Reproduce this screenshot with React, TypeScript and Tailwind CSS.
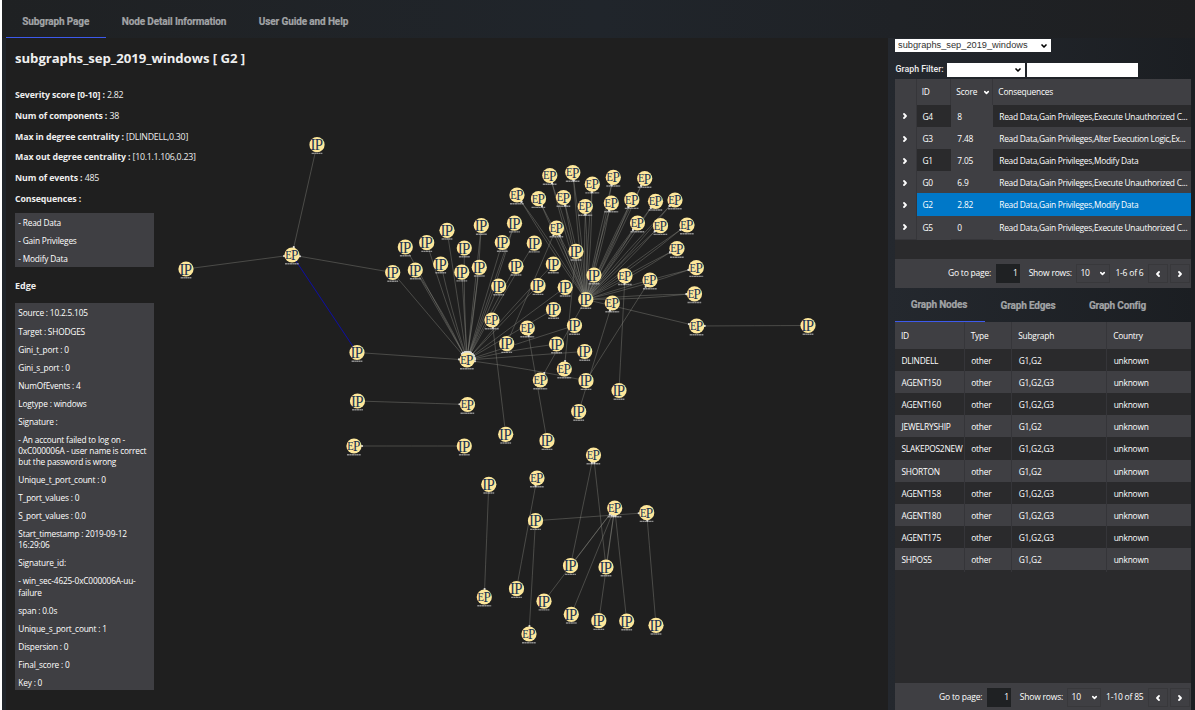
import type { ReactNode } from "react";
import { ChevronDown, ChevronLeft, ChevronRight } from "lucide-react";

type Kind = "IP" | "EP";
type Point = [number, number];

const HUB_A: Point = [467, 360];
const HUB_B: Point = [585.8, 299.5];

// IP nodes that only report to the left hub
const SPOKES_A: Point[] = [
  [405.3, 247], [426.7, 242.7], [447, 230.3], [481.3, 225.5], [464.3, 248], [502.3, 242.5],
  [514.5, 223.2], [534.3, 243.2], [392.7, 272.5], [415.3, 270], [440.7, 264], [461.8, 272.2],
  [479.3, 267.3], [516, 266.3], [498.7, 286], [538, 285.7], [553.3, 264], [565.2, 287.3],
  [553.5, 309.5], [556.5, 344], [584.7, 351.5], [574.5, 325.5], [586, 380.7],
];

// Endpoints that are reached from the right hub
const SPOKES_B: Point[] = [
  [549.8, 175.5], [572.8, 172.5], [592.3, 184.2], [613.3, 177.3], [644.7, 178.5], [517, 195],
  [538.5, 198.7], [563.5, 197.5], [585.3, 206.5], [611.3, 203], [631.8, 199.7], [655.5, 201.3],
  [675, 200], [556.5, 228], [637.5, 223], [660.5, 225.7], [687, 225], [677, 248.5],
  [696.3, 267.7], [694.5, 293.8],
];

const OTHER_EP: Point[] = [
  [625, 275.8], [650, 280], [612.3, 303], [696.7, 326], [492, 320], [527.3, 328], [540.3, 380],
  [564.3, 369], HUB_A, [593.5, 455], [537, 478], [614.7, 508], [646.7, 512.7], [484.3, 597],
  [529, 634], [292, 255], [467.5, 404.5], [354, 446],
];

const OTHER_IP: Point[] = [
  [506.7, 343.7], [576, 251.3], [594, 275], HUB_B, [619, 390.5], [578.7, 411.5], [505.7, 434.3],
  [547, 440.7], [488.8, 484.3], [535.5, 520.7], [570.5, 565.7], [606, 567], [516.5, 588.7],
  [544, 601.2], [571.3, 614.3], [598.8, 620.7], [626.7, 621], [656, 625.3], [317, 144.7],
  [186, 269], [357, 352.5], [357.5, 401], [464.3, 446], [808, 325.5],
];

const LINKS: [Point, Point][] = [
  [[317, 144.7], [292, 255]],
  [[186, 269], [292, 255]],
  [[392.7, 272.5], [292, 255]],
  [[357, 352.5], HUB_A],
  [[357.5, 401], [467.5, 404.5]],
  [[464.3, 446], [354, 446]],
  [[808, 325.5], [696.7, 326]],
  [HUB_B, [696.7, 326]],
  [HUB_B, [540.3, 380]],
  [[576, 251.3], [564.3, 369]],
  [[505.7, 434.3], [492, 320]],
  [[547, 440.7], [527.3, 328]],
  [[506.7, 343.7], [556.5, 228]],
  [[578.7, 411.5], [612.3, 303]],
  [[586, 380.7], [650, 280]],
  [[619, 390.5], [625, 275.8]],
  [[488.8, 484.3], [484.3, 597]],
  [[516.5, 588.7], [537, 478]],
  [[535.5, 520.7], [529, 634]],
  [[535.5, 520.7], [646.7, 512.7]],
  [[570.5, 565.7], [593.5, 455]],
  [[606, 567], [593.5, 455]],
  [[606, 567], [614.7, 508]],
  [[570.5, 565.7], [614.7, 508]],
  [[544, 601.2], [614.7, 508]],
  [[571.3, 614.3], [614.7, 508]],
  [[598.8, 620.7], [614.7, 508]],
  [[626.7, 621], [614.7, 508]],
  [[656, 625.3], [646.7, 512.7]],
];

function Link({ from, to, bend = 0 }: { from: Point; to: Point; bend?: number }) {
  const dx = to[0] - from[0];
  const dy = to[1] - from[1];
  const len = Math.hypot(dx, dy);
  const end: Point = [to[0] - (dx / len) * 8, to[1] - (dy / len) * 8];
  const mid: Point = [(from[0] + to[0]) / 2 - (dy / len) * bend, (from[1] + to[1]) / 2 + (dx / len) * bend];
  return (
    <g>
      <path d={`M${from[0]} ${from[1]}Q${mid[0]} ${mid[1]} ${end[0]} ${end[1]}`} fill="none" stroke="#8d8b84" strokeOpacity={0.62} strokeWidth={0.65} />
      <circle cx={end[0]} cy={end[1]} r={1.1} fill="#dedede" />
    </g>
  );
}

function Node({ at, kind }: { at: Point; kind: Kind }) {
  const half = kind === "IP" ? 5.4 : 7;
  return (
    <g transform={`translate(${at[0]} ${at[1]})`}>
      <circle r={7.6} fill="#fde79b" />
      <g className="font-['Liberation_Serif',serif]" fill="#1b3350">
        {kind === "IP" ? (
          <>
            <text transform="translate(-6.6 5.5) scale(.9 1)" fontSize={16.5}>I</text>
            <text transform="translate(-2.2 5.5) scale(.9 1)" fontSize={16.5}>P</text>
          </>
        ) : (
          <>
            <text transform="translate(-6.8 3.8) scale(.82 1)" fontSize={13}>E</text>
            <text transform="translate(-.9 5) scale(.95 1)" fontSize={14}>P</text>
          </>
        )}
      </g>
      <path d={`M${-half} 8.7H${half}`} stroke="#d5d5d5" strokeWidth={1.4} strokeDasharray="2.4 .3 1.6 .3" opacity={0.6} />
    </g>
  );
}

function Graph() {
  return (
    <svg className="h-full w-full" viewBox="160 38 728 672">
      {SPOKES_A.map((p, i) => <Link key={i} from={p} to={HUB_A} bend={i % 3 === 1 ? 2 : 0} />)}
      {[3, 6, 9].map((i) => <Link key={i} from={SPOKES_A[i]} to={HUB_A} bend={-4} />)}
      {SPOKES_B.map((p, i) => <Link key={i} from={HUB_B} to={p} bend={3} />)}
      {SPOKES_B.map((p, i) => <Link key={i} from={HUB_B} to={p} bend={-2} />)}
      {LINKS.map(([a, b], i) => <Link key={i} from={a} to={b} />)}
      <path d="M292 255L357 352.5" stroke="#0e0ea6" strokeWidth={1} />
      {SPOKES_A.map((p, i) => <Node key={i} at={p} kind="IP" />)}
      {SPOKES_B.map((p, i) => <Node key={i} at={p} kind="EP" />)}
      {OTHER_EP.map((p, i) => <Node key={i} at={p} kind="EP" />)}
      {OTHER_IP.map((p, i) => <Node key={i} at={p} kind="IP" />)}
    </svg>
  );
}

const FACTS = [
  ["Severity score [0-10] :", "2.82"],
  ["Num of components :", "38"],
  ["Max in degree centrality :", "[DLINDELL,0.30]"],
  ["Max out degree centrality :", "[10.1.1.106,0.23]"],
  ["Num of events :", "485"],
  ["Consequences :", ""],
];

const EDGE_INFO: string[][] = [
  ["Source : 10.2.5.105"], ["Target : SHODGES"], ["Gini_t_port : 0"], ["Gini_s_port : 0"],
  ["NumOfEvents : 4"], ["Logtype : windows"], ["Signature :"],
  ["- An account failed to log on -", "0xC000006A - user name is correct", "but the password is wrong"],
  ["Unique_t_port_count : 0"], ["T_port_values : 0"], ["S_port_values : 0.0"],
  ["Start_timestamp : 2019-09-12", "16:29:06"], ["Signature_id:"],
  ["- win_sec-4625-0xC000006A-uu-", "failure"], ["span : 0.0s"], ["Unique_s_port_count : 1"],
  ["Dispersion : 0"], ["Final_score : 0"], ["Key : 0"],
];

function InfoBox({ items, className }: { items: string[][]; className: string }) {
  return (
    <div className={`flex w-[139px] flex-col gap-[6.83px] bg-[#3f3f43] pl-[3.3px] text-[8.3px] leading-[11.2px] font-medium tracking-[-0.18px] text-white ${className}`}>
      {items.map((lines) => (
        <div key={lines[0]}>
          {lines.map((l) => <p key={l} className="whitespace-nowrap">{l}</p>)}
        </div>
      ))}
    </div>
  );
}

function Details() {
  return (
    <section className="w-[154px] shrink-0 pl-[9px] text-[#eeeeee]">
      <h1 className="mt-[10px] h-[20px] text-[13.2px] leading-[20px] font-bold whitespace-nowrap tracking-[-0.06px]">subgraphs_sep_2019_windows [ G2 ]</h1>
      <div className="mt-[17px]">
        {FACTS.map(([name, value]) => (
          <p key={name} className="h-[20.8px] text-[8.8px] leading-[20.8px] whitespace-nowrap tracking-[-0.11px]">
            <b>{name}</b> <span className="tracking-[-0.27px]">{value}</span>
          </p>
        ))}
      </div>
      <InfoBox className="mt-[3.2px] h-[54px] pt-[4.3px]" items={[["- Read Data"], ["- Gain Privileges"], ["- Modify Data"]]} />
      <h2 className="mt-[9px] h-[20px] text-[9px] leading-[20px] font-bold">Edge</h2>
      <InfoBox className="mt-[7.5px] h-[387px] pt-[4px]" items={EDGE_INFO} />
    </section>
  );
}

function Tab({ children, className }: { children: ReactNode; className: string }) {
  return <div className={`flex items-center justify-center font-['Roboto',sans-serif] font-bold whitespace-nowrap text-[#a2a4a6] [-webkit-text-stroke:0.2px_#a2a4a6] ${className}`}>{children}</div>;
}

const GRAPHS = [
  ["G4", "8", "Read Data,Gain Privileges,Execute Unauthorized C..."],
  ["G3", "7.48", "Read Data,Gain Privileges,Alter Execution Logic,Ex..."],
  ["G1", "7.05", "Read Data,Gain Privileges,Modify Data"],
  ["G0", "6.9", "Read Data,Gain Privileges,Execute Unauthorized C..."],
  ["G2", "2.82", "Read Data,Gain Privileges,Modify Data"],
  ["G5", "0", "Read Data,Gain Privileges,Execute Unauthorized C..."],
];

const NODES = [
  ["DLINDELL", "G1,G2"], ["AGENT150", "G1,G2,G3"], ["AGENT160", "G1,G2,G3"], ["JEWELRYSHIP", "G1,G2"],
  ["SLAKEPOS2NEW", "G1,G2,G3"], ["SHORTON", "G1,G2"], ["AGENT158", "G1,G2,G3"], ["AGENT180", "G1,G2,G3"],
  ["AGENT175", "G1,G2,G3"], ["SHPOS5", "G1,G2"],
];

function Pager({ range, className, gap }: { range: string; className: string; gap: string }) {
  return (
    <div className={`flex shrink-0 items-center justify-end bg-[#3f3f43] pr-[0.5px] text-[8.5px] font-medium whitespace-nowrap tracking-[-0.2px] text-white ${className}`}>
      <span>Go to page:</span>
      <span className="ml-[4.5px] flex h-[19px] w-[24.5px] items-center justify-end bg-[#1f2123] pr-[2.5px]">1</span>
      <span className="ml-[8.5px]">Show rows:</span>
      <span className="ml-[4px] flex h-[19px] w-[34px] items-center justify-between border border-[#38383b] pr-[2.5px] pl-[3.5px]">
        10 <ChevronDown size={7} strokeWidth={5.5} />
      </span>
      <span className={gap}>{range}</span>
      <span className="ml-[4.5px] flex h-[19px] w-[20px] items-center justify-center border border-[#38383b]"><ChevronLeft size={8} strokeWidth={5.5} /></span>
      <span className="ml-[2px] flex h-[19px] w-[20px] items-center justify-center border border-[#38383b]"><ChevronRight size={8} strokeWidth={5.5} /></span>
    </div>
  );
}

const GRAPH_COLS = "grid grid-cols-[21.7px_34.6px_41.5px_1fr] items-stretch";
const NODE_COLS = "grid grid-cols-[69.7px_47.5px_95px_1fr] items-stretch";

function GraphTable() {
  return (
    <div className="flex h-[180px] flex-col bg-[#2a2a2c] text-[8.4px] font-medium tracking-[-0.27px] whitespace-nowrap text-white">
      <div className={`${GRAPH_COLS} h-[25.6px] shrink-0 bg-[#3f3f43] leading-[26px] tracking-[-0.18px]`}>
        <span className="border-r border-[#36363a]" />
        <span className="border-r border-[#36363a] pl-[5px]">ID</span>
        <span className="flex items-center justify-between border-r border-[#36363a] pr-[2px] pl-[5px]">Score <ChevronDown size={7} strokeWidth={5.5} /></span>
        <span className="pl-[5.5px]">Consequences</span>
      </div>
      {GRAPHS.map(([id, score, text], i) => {
        const selected = id === "G2";
        const cell = selected ? "bg-[#0078c8]" : i % 2 ? "bg-[#3f3f43]" : "bg-[#2a2a2c]";
        return (
          <div key={id} className={`${GRAPH_COLS} h-[22.2px] shrink-0 leading-[23.6px]`}>
            <span className="flex items-center justify-center border-r border-b border-[#36363a] bg-[#3f3f43]"><ChevronRight size={8} strokeWidth={5.5} /></span>
            <span className={`pl-[5.7px] ${cell}`}>{id}</span>
            <span className={`pl-[6px] tracking-[-0.15px] ${selected ? "bg-[#0078c8]" : "border-b border-[#36363a] bg-[#3f3f43]"}`}>{score}</span>
            <span className={`pl-[6.5px] ${cell}`}>{text}</span>
          </div>
        );
      })}
    </div>
  );
}

function NodeTable() {
  return (
    <div className="flex h-[361px] shrink-0 flex-col bg-[#2a2a2c] text-[8.4px] font-medium tracking-[-0.23px] whitespace-nowrap text-white">
      <div className={`${NODE_COLS} h-[26.6px] shrink-0 bg-[#3f3f43] leading-[27px]`}>
        {["ID", "Type", "Subgraph", "Country"].map((h) => <span key={h} className="border-r border-[#36363a] pl-[6px] last:border-r-0">{h}</span>)}
      </div>
      {NODES.map(([id, sub], i) => (
        <div key={id} className={`${NODE_COLS} h-[22.2px] shrink-0 leading-[23.6px] ${i % 2 ? "bg-[#3f3f43]" : "bg-[#2a2a2c]"}`}>
          {[id, "other", sub, "unknown"].map((v) => <span key={v} className="border-r border-[#353539] pl-[6.5px] last:border-r-0">{v}</span>)}
        </div>
      ))}
    </div>
  );
}

function SidePanel() {
  return (
    <aside className="flex w-[307px] shrink-0 flex-col bg-gradient-to-r from-[#24282e] to-[#1b1e22] pr-[4.5px] pl-[7px]">
      <div className="mt-[1px] flex h-[13px] w-[156px] shrink-0 items-center justify-between bg-white pr-[3px] pl-[3px] font-['Liberation_Sans',sans-serif] text-[9.25px] whitespace-nowrap text-[#333333]">
        subgraphs_sep_2019_windows <ChevronDown size={8} strokeWidth={5} className="text-black" />
      </div>
      <div className="mt-[11px] flex h-[14px] shrink-0 items-center">
        <span className="w-[52px] pl-[0.5px] font-['Roboto',sans-serif] text-[8.8px] font-medium whitespace-nowrap text-[#eeeeee]">Graph Filter:</span>
        <span className="flex h-[13.5px] w-[77.5px] items-center justify-end bg-white pr-[3px]"><ChevronDown size={8} strokeWidth={5} className="text-black" /></span>
        <span className="ml-[2.5px] h-[13.5px] w-[110.5px] bg-white" />
      </div>
      <div className="mt-[2px] shrink-0"><GraphTable /></div>
      <Pager className="h-[29px]" range="1-6 of 6" gap="ml-[5.5px]" />
      <nav className="flex h-[34px] shrink-0 text-[10px] tracking-[-0.17px]">
        <Tab className="w-[90px] border-b border-[#3d5aec] pr-[2px]">Graph Nodes</Tab>
        <Tab className="w-[88px] pr-[2px]">Graph Edges</Tab>
        <Tab className="w-[91px] pr-[2px]">Graph Config</Tab>
      </nav>
      <NodeTable />
      <Pager className="h-[29px]" range="1-10 of 85" gap="ml-[5px]" />
    </aside>
  );
}

export default function App() {
  return (
    <div className="h-[710px] w-[1195px] overflow-hidden bg-white pl-[2px] font-['Open_Sans','Noto_Sans',sans-serif]">
      <div className="flex h-full flex-col bg-[#20252a]">
        <nav className="flex h-[38px] shrink-0 bg-gradient-to-r from-[#1f2123] via-[#20252b] to-[#1e1f21] pl-[4px] text-[10px] tracking-[-0.12px]">
          <Tab className="w-[99.5px] border-b border-[#3d5aec] pt-[5px]">Subgraph Page</Tab>
          <Tab className="w-[137px] pt-[5px]">Node Detail Information</Tab>
          <Tab className="w-[122px] pt-[5px]">User Guide and Help</Tab>
        </nav>
        <main className="flex min-h-0 flex-1 pl-[4px]">
          <div className="flex w-[882px] shrink-0 bg-[#1f1f1f]">
            <Details />
            <div className="h-full w-[728px] shrink-0"><Graph /></div>
          </div>
          <SidePanel />
        </main>
      </div>
    </div>
  );
}
